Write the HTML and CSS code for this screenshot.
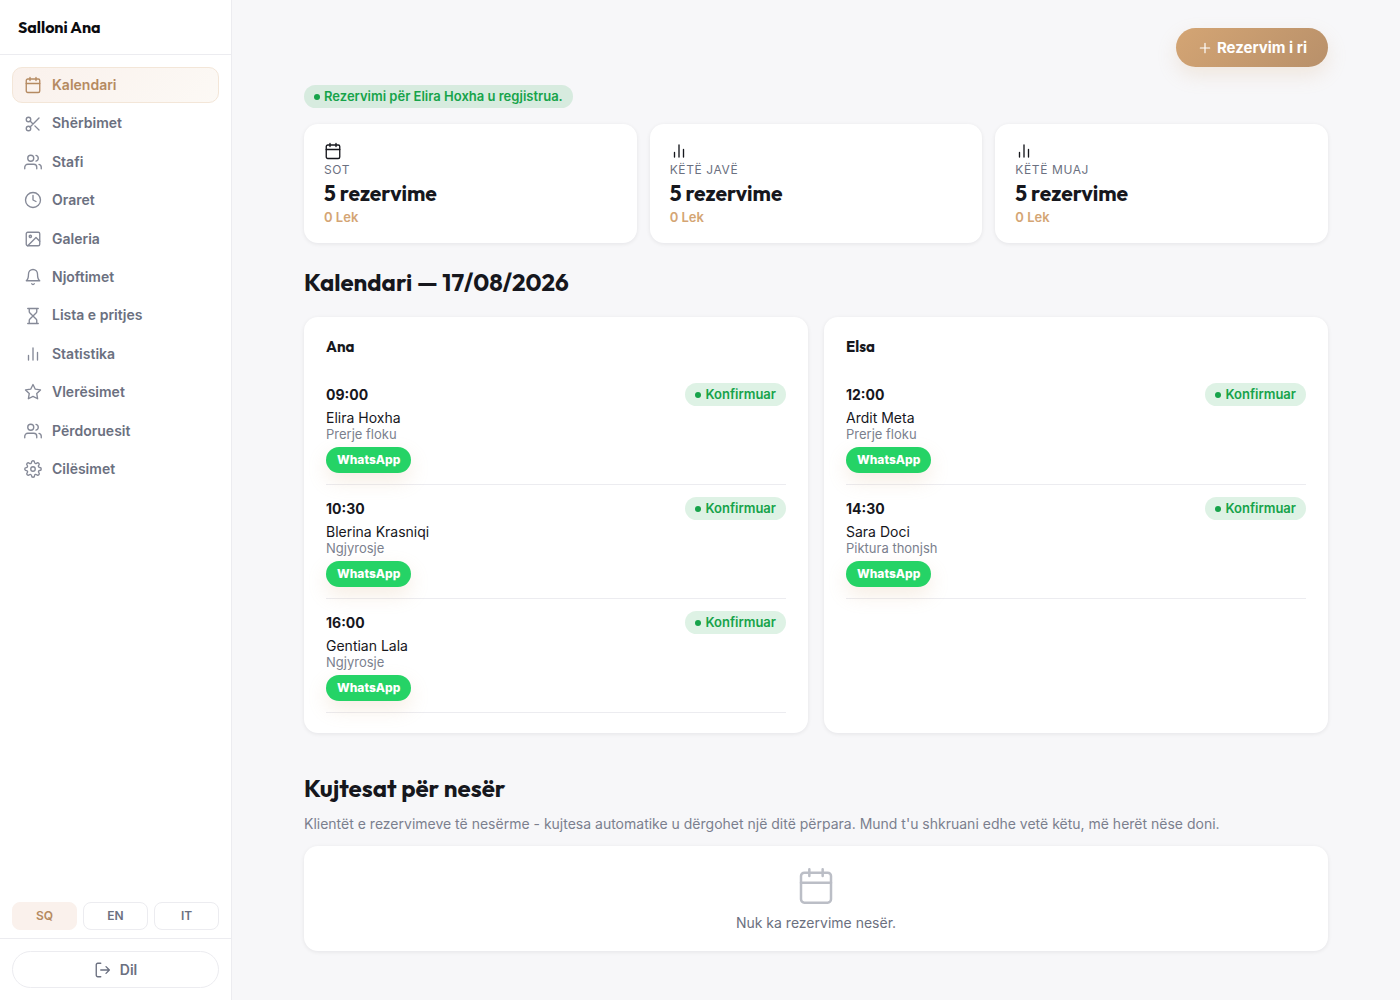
FILE: index.html
```html
<!DOCTYPE html>
<html lang="sq">
<head>
    <meta charset="UTF-8">
    <meta name="viewport" content="width=device-width, initial-scale=1">
    <title>Salloni Ana</title>
    <link rel="stylesheet" href="styles.css">
</head>
<body>
    <!-- Icons shared by the menu and the cards -->
    <svg class="icon-defs" aria-hidden="true">
        <symbol id="i-calendar" viewBox="0 0 24 24"><rect x="3" y="4" width="18" height="18" rx="2"/><path d="M16 2v4M8 2v4M3 10h18"/></symbol>
        <symbol id="i-scissors" viewBox="0 0 24 24"><circle cx="6" cy="6" r="3"/><circle cx="6" cy="18" r="3"/><path d="M20 4 8.12 15.88M14.47 14.48 20 20M8.12 8.12 12 12"/></symbol>
        <symbol id="i-users" viewBox="0 0 24 24"><path d="M17 21v-2a4 4 0 0 0-4-4H5a4 4 0 0 0-4 4v2"/><circle cx="9" cy="7" r="4"/><path d="M23 21v-2a4 4 0 0 0-3-3.87M16 3.13a4 4 0 0 1 0 7.75"/></symbol>
        <symbol id="i-clock" viewBox="0 0 24 24"><circle cx="12" cy="12" r="10"/><path d="M12 6v6l4 2"/></symbol>
        <symbol id="i-image" viewBox="0 0 24 24"><rect x="3" y="3" width="18" height="18" rx="2"/><circle cx="8.5" cy="8.5" r="1.5"/><path d="m21 15-5-5L5 21"/></symbol>
        <symbol id="i-bell" viewBox="0 0 24 24"><path d="M18 8A6 6 0 0 0 6 8c0 7-3 9-3 9h18s-3-2-3-9M13.73 21a2 2 0 0 1-3.46 0"/></symbol>
        <symbol id="i-hourglass" viewBox="0 0 24 24"><path d="M5 22h14M5 2h14M17 22v-4.17a2 2 0 0 0-.59-1.42L12 12l-4.41 4.41A2 2 0 0 0 7 17.83V22M7 2v4.17a2 2 0 0 0 .59 1.42L12 12l4.41-4.41A2 2 0 0 0 17 6.17V2"/></symbol>
        <symbol id="i-chart" viewBox="0 0 24 24"><path d="M18 20V10M12 20V4M6 20v-6"/></symbol>
        <symbol id="i-star" viewBox="0 0 24 24"><path d="m12 2 3.09 6.26L22 9.27l-5 4.87 1.18 6.88L12 17.77l-6.18 3.25L7 14.14 2 9.27l6.91-1.01z"/></symbol>
        <symbol id="i-settings" viewBox="0 0 24 24"><circle cx="12" cy="12" r="3"/><path d="M19.4 15a1.65 1.65 0 0 0 .33 1.82l.06.06a2 2 0 1 1-2.83 2.83l-.06-.06a1.65 1.65 0 0 0-1.82-.33 1.65 1.65 0 0 0-1 1.51V21a2 2 0 0 1-4 0v-.09A1.65 1.65 0 0 0 9 19.4a1.65 1.65 0 0 0-1.82.33l-.06.06a2 2 0 1 1-2.83-2.83l.06-.06a1.65 1.65 0 0 0 .33-1.82 1.65 1.65 0 0 0-1.51-1H3a2 2 0 0 1 0-4h.09A1.65 1.65 0 0 0 4.6 9a1.65 1.65 0 0 0-.33-1.82l-.06-.06a2 2 0 1 1 2.83-2.83l.06.06a1.65 1.65 0 0 0 1.82.33H9a1.65 1.65 0 0 0 1-1.51V3a2 2 0 0 1 4 0v.09a1.65 1.65 0 0 0 1 1.51 1.65 1.65 0 0 0 1.82-.33l.06-.06a2 2 0 1 1 2.83 2.83l-.06.06a1.65 1.65 0 0 0-.33 1.82V9a1.65 1.65 0 0 0 1.51 1H21a2 2 0 0 1 0 4h-.09a1.65 1.65 0 0 0-1.51 1z"/></symbol>
        <symbol id="i-logout" viewBox="0 0 24 24"><path d="M9 21H5a2 2 0 0 1-2-2V5a2 2 0 0 1 2-2h4M16 16.5l4.5-4.5L16 7.5M20.5 12H9"/></symbol>
        <symbol id="i-plus" viewBox="0 0 24 24"><path d="M12 5v14M5 12h14"/></symbol>
    </svg>

    <div class="layout">
        <aside class="sidebar">
            <div class="brand">Salloni Ana</div>
            <nav class="nav">
                <a class="nav-item active" href="#"><svg class="icon"><use href="#i-calendar"/></svg>Kalendari</a>
                <a class="nav-item" href="#"><svg class="icon"><use href="#i-scissors"/></svg>Shërbimet</a>
                <a class="nav-item" href="#"><svg class="icon"><use href="#i-users"/></svg>Stafi</a>
                <a class="nav-item" href="#"><svg class="icon"><use href="#i-clock"/></svg>Oraret</a>
                <a class="nav-item" href="#"><svg class="icon"><use href="#i-image"/></svg>Galeria</a>
                <a class="nav-item" href="#"><svg class="icon"><use href="#i-bell"/></svg>Njoftimet</a>
                <a class="nav-item" href="#"><svg class="icon"><use href="#i-hourglass"/></svg>Lista e pritjes</a>
                <a class="nav-item" href="#"><svg class="icon"><use href="#i-chart"/></svg>Statistika</a>
                <a class="nav-item" href="#"><svg class="icon"><use href="#i-star"/></svg>Vlerësimet</a>
                <a class="nav-item" href="#"><svg class="icon"><use href="#i-users"/></svg>Përdoruesit</a>
                <a class="nav-item" href="#"><svg class="icon"><use href="#i-settings"/></svg>Cilësimet</a>
            </nav>
            <div class="langs">
                <a class="lang active" href="#">SQ</a>
                <a class="lang" href="#">EN</a>
                <a class="lang" href="#">IT</a>
            </div>
            <div class="sidebar-footer">
                <button class="logout" type="button"><svg class="icon"><use href="#i-logout"/></svg>Dil</button>
            </div>
        </aside>

        <main class="main">
            <div class="topbar">
                <button class="btn btn-new" type="button"><svg class="icon"><use href="#i-plus"/></svg>Rezervim i ri</button>
            </div>

            <div class="notice"><span class="badge">Rezervimi për Elira Hoxha u regjistrua.</span></div>

            <div class="stats">
                <div class="card stat">
                    <svg class="icon"><use href="#i-calendar"/></svg>
                    <div class="stat-label">SOT</div>
                    <div class="stat-value">5 rezervime</div>
                    <div class="stat-money">0 Lek</div>
                </div>
                <div class="card stat">
                    <svg class="icon"><use href="#i-chart"/></svg>
                    <div class="stat-label">KËTË JAVË</div>
                    <div class="stat-value">5 rezervime</div>
                    <div class="stat-money">0 Lek</div>
                </div>
                <div class="card stat">
                    <svg class="icon"><use href="#i-chart"/></svg>
                    <div class="stat-label">KËTË MUAJ</div>
                    <div class="stat-value">5 rezervime</div>
                    <div class="stat-money">0 Lek</div>
                </div>
            </div>

            <h2>Kalendari — 17/08/2026</h2>
            <div class="columns">
                <section class="card staff">
                    <h3>Ana</h3>
                    <div class="booking">
                        <div class="booking-head"><strong>09:00</strong><span class="badge">Konfirmuar</span></div>
                        <div class="client">Elira Hoxha</div>
                        <div class="service">Prerje floku</div>
                        <a class="btn btn-wa" href="#">WhatsApp</a>
                    </div>
                    <div class="booking">
                        <div class="booking-head"><strong>10:30</strong><span class="badge">Konfirmuar</span></div>
                        <div class="client">Blerina Krasniqi</div>
                        <div class="service">Ngjyrosje</div>
                        <a class="btn btn-wa" href="#">WhatsApp</a>
                    </div>
                    <div class="booking">
                        <div class="booking-head"><strong>16:00</strong><span class="badge">Konfirmuar</span></div>
                        <div class="client">Gentian Lala</div>
                        <div class="service">Ngjyrosje</div>
                        <a class="btn btn-wa" href="#">WhatsApp</a>
                    </div>
                </section>
                <section class="card staff">
                    <h3>Elsa</h3>
                    <div class="booking">
                        <div class="booking-head"><strong>12:00</strong><span class="badge">Konfirmuar</span></div>
                        <div class="client">Ardit Meta</div>
                        <div class="service">Prerje floku</div>
                        <a class="btn btn-wa" href="#">WhatsApp</a>
                    </div>
                    <div class="booking">
                        <div class="booking-head"><strong>14:30</strong><span class="badge">Konfirmuar</span></div>
                        <div class="client">Sara Doci</div>
                        <div class="service">Piktura thonjsh</div>
                        <a class="btn btn-wa" href="#">WhatsApp</a>
                    </div>
                </section>
            </div>

            <h2 class="reminders-title">Kujtesat për nesër</h2>
            <p class="hint">Klientët e rezervimeve të nesërme - kujtesa automatike u dërgohet një ditë përpara. Mund t'u shkruani edhe vetë këtu, më herët nëse doni.</p>
            <div class="card empty">
                <svg class="icon"><use href="#i-calendar"/></svg>
                <div>Nuk ka rezervime nesër.</div>
            </div>
        </main>
    </div>
</body>
</html>
```
FILE: styles.css
```css
* {
    box-sizing: border-box;
}

body {
    margin: 0;
    font-family: Inter, sans-serif;
    font-size: 15px;
    line-height: 1.6;
    color: #16171d;
    background: #f7f7f9;
}

h2, h3, .brand, .stat-value {
    font-family: Outfit, Lato, sans-serif;
    font-weight: 700;
}

a {
    text-decoration: none;
}

.icon-defs {
    display: none;
}

.icon {
    display: block;
    width: 18px;
    height: 18px;
    flex: none;
    fill: none;
    stroke: currentColor;
    stroke-width: 1.8;
    stroke-linecap: round;
    stroke-linejoin: round;
}

.layout {
    display: flex;
    min-height: 100vh;
}

/* Sidebar */
.sidebar {
    position: sticky;
    top: 0;
    display: flex;
    flex-direction: column;
    flex: none;
    width: 232px;
    height: 100vh;
    background: #fff;
    border-right: 1px solid #ececf0;
}

.brand {
    padding: 15px 18px;
    font-size: 16px;
    line-height: 24px;
    color: #0b0b0f;
    border-bottom: 1px solid #ececf0;
}

.nav {
    display: flex;
    flex-direction: column;
    flex: 1;
    gap: 2px;
    padding: 12px;
}

.nav-item {
    display: flex;
    align-items: center;
    gap: 10px;
    padding: 6px 11px;
    font-size: 14px;
    font-weight: 600;
    color: #6b7080;
    border: 1px solid transparent;
    border-radius: 10px;
}

.nav-item .icon {
    color: #858997;
}

.nav-item.active {
    color: #b58a61;
    background: linear-gradient(135deg, #faf1ec, #fcf9f5);
    border-color: #f3e6d8;
}

.nav-item.active .icon {
    color: #b58a61;
}

.langs {
    display: flex;
    gap: 6px;
    padding: 0 12px 8px;
}

.lang {
    flex: 1;
    font-size: 12px;
    font-weight: 600;
    line-height: 26px;
    text-align: center;
    color: #6b7080;
    border: 1px solid #ececf0;
    border-radius: 8px;
}

.lang.active {
    color: #b58a61;
    background: #faf1ec;
    border-color: #faf1ec;
}

.sidebar-footer {
    padding: 12px;
    border-top: 1px solid #ececf0;
}

.logout {
    display: flex;
    align-items: center;
    justify-content: center;
    gap: 8px;
    width: 100%;
    height: 37px;
    font: 600 14px Inter, sans-serif;
    color: #6b7080;
    background: #fff;
    border: 1px solid #ececf0;
    border-radius: 999px;
    cursor: pointer;
}

/* Content */
.main {
    flex: 1;
    min-width: 0;
    max-width: 1080px;
    margin: 0 auto;
    padding: 28px;
}

.topbar {
    display: flex;
    justify-content: flex-end;
    margin-bottom: 18px;
}

.btn {
    display: inline-flex;
    align-items: center;
    font-family: Inter, sans-serif;
    font-weight: 700;
    color: #fff;
    border: 0;
    border-radius: 999px;
    box-shadow: 0 8px 20px rgba(212, 165, 116, 0.2);
    cursor: pointer;
}

.btn-new {
    gap: 4px;
    height: 39px;
    padding: 0 21px;
    font-size: 15px;
    background: linear-gradient(135deg, #d4a574, #b8906a);
}

.btn-new .icon {
    width: 16px;
    height: 16px;
}

.btn-wa {
    height: 26px;
    padding: 0 11px;
    font-size: 12px;
    font-weight: 800;
    background: #25d366;
}

.notice {
    display: flex;
    margin-bottom: 16px;
}

.badge {
    display: inline-flex;
    align-items: center;
    gap: 4px;
    padding: 0 10px;
    font-size: 13px;
    font-weight: 600;
    line-height: 23px;
    color: #16a34a;
    background: rgba(22, 163, 74, 0.14);
    border-radius: 999px;
}

.badge::before {
    content: "";
    width: 6px;
    height: 6px;
    background: currentColor;
    border-radius: 50%;
}

.card {
    background: #fff;
    border-radius: 14px;
    box-shadow: 0 1px 4px rgba(16, 18, 29, 0.08);
}

.stats {
    display: grid;
    grid-template-columns: repeat(3, 1fr);
    gap: 13px;
}

.stat {
    padding: 18px 20px 16px;
}

.stat-label {
    font-size: 12px;
    line-height: 20px;
    letter-spacing: 0.05em;
    color: #6b7080;
}

.stat-value {
    font-size: 21px;
    line-height: 27px;
}

.stat-money {
    font-size: 13px;
    font-weight: 600;
    line-height: 20px;
    color: #d4a574;
}

h2 {
    margin: 23px 0 19px;
    font-size: 24px;
    line-height: 32px;
}

.columns {
    display: grid;
    grid-template-columns: repeat(2, 1fr);
    gap: 16px;
}

.staff {
    padding: 20px 22px;
}

h3 {
    margin: 0 0 14px;
    font-size: 15px;
    line-height: 20px;
}

.booking {
    padding: 12px 0 11px;
    border-bottom: 1px solid #ececf0;
}

.booking-head {
    display: flex;
    align-items: center;
    justify-content: space-between;
    margin-bottom: 4px;
    font-size: 14px;
    line-height: 23px;
}

.booking-head strong {
    font-weight: 700;
}

.client {
    font-size: 14px;
    line-height: 16px;
}

.service {
    margin-bottom: 5px;
    font-size: 13px;
    line-height: 16px;
    color: #7b7f8e;
}

.reminders-title {
    margin: 39px 0 9px;
}

.hint {
    margin: 0 0 11px;
    font-size: 14px;
    line-height: 22px;
    color: #7b7f8e;
}

.empty {
    display: flex;
    flex-direction: column;
    align-items: center;
    gap: 6px;
    padding: 20px 20px 17px;
    font-size: 14px;
    line-height: 22px;
    color: #6b7080;
}

.empty .icon {
    width: 40px;
    height: 40px;
    stroke-width: 1.5;
    color: #bbbec6;
}

@media (max-width: 800px) {
    .stats, .columns {
        grid-template-columns: 1fr;
    }
}
```
